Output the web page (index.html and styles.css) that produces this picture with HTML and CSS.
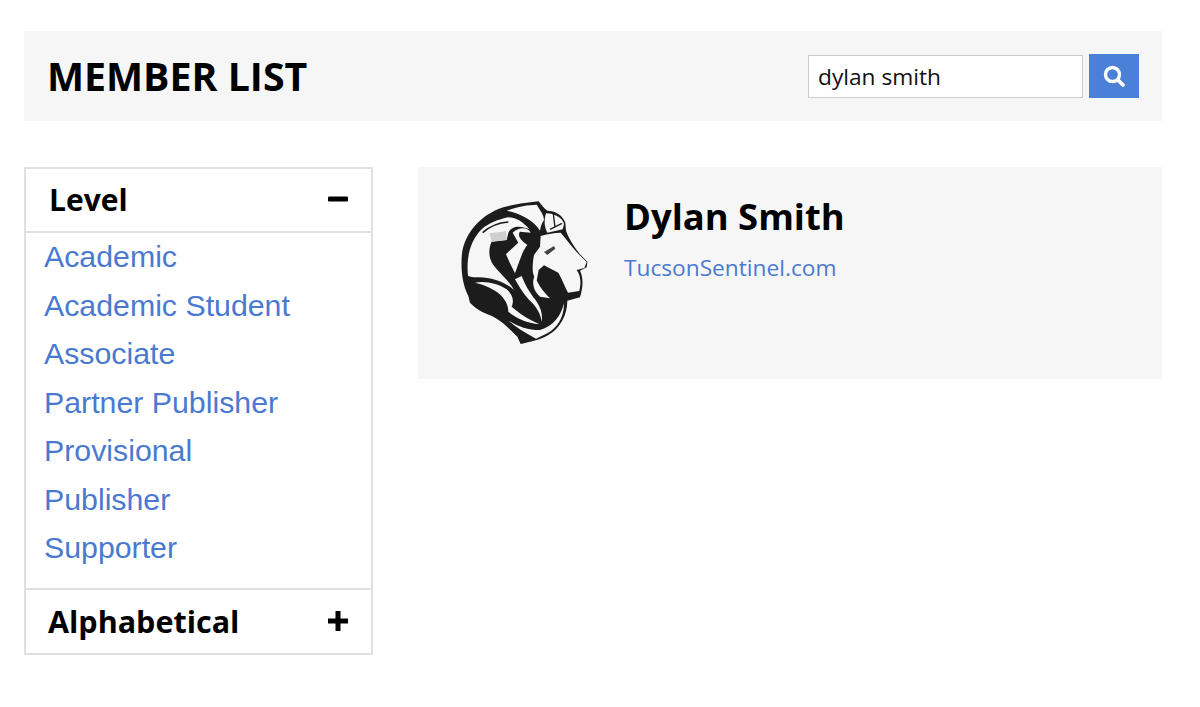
FILE: index.html
```html
<!DOCTYPE html>
<html lang="en">
<head>
<meta charset="utf-8">
<title>Member List</title>
<link rel="stylesheet" href="styles.css">
</head>
<body>
<header class="topbar">
  <h1 class="title">MEMBER LIST</h1>
  <form class="search">
    <input class="search-input" type="text" value="dylan smith">
    <button class="search-btn" type="button" aria-label="Search">
      <svg width="24" height="24" viewBox="0 0 24 24"><circle cx="10.5" cy="10.5" r="7" fill="none" stroke="#fff" stroke-width="3.4"/><path d="M15.8 15.8L21 21" stroke="#fff" stroke-width="3.8" stroke-linecap="round"/></svg>
    </button>
  </form>
</header>
<main class="layout">
  <aside class="filters">
    <div class="filter-head"><span>Level</span><svg class="sign" width="20" height="20" viewBox="0 0 20 20"><rect x="0" y="7.5" width="20" height="5" rx="1.2" fill="#000"/></svg></div>
    <ul class="filter-list">
      <li><a href="#">Academic</a></li>
      <li><a href="#">Academic Student</a></li>
      <li><a href="#">Associate</a></li>
      <li><a href="#">Partner Publisher</a></li>
      <li><a href="#">Provisional</a></li>
      <li><a href="#">Publisher</a></li>
      <li><a href="#">Supporter</a></li>
    </ul>
    <div class="filter-head filter-head-alpha"><span>Alphabetical</span><svg class="sign" width="20" height="20" viewBox="0 0 20 20"><path d="M0 7.5h7.5V0h5v7.5H20v5h-7.5V20h-5v-7.5H0z" fill="#000"/></svg></div>
  </aside>
  <section class="result">
    <svg class="lion" width="170" height="165" viewBox="0 0 510 495">
      <path fill="#1c1c1c" d="M296 34C305 45 312 55 322 62C345 62 368 75 376 98L378 122C392 160 420 195 442 215L440 232L420 242C430 262 430 290 420 322L382 332C382 375 360 415 325 435C300 450 270 455 242 462L232 440C210 420 190 395 160 380C140 370 115 365 90 338L85 318C65 280 62 230 66 190C75 130 120 75 190 52C225 42 260 38 296 34Z"/>
      <path fill="#f6f6f6" d="M84 258C78 200 92 150 125 118C145 100 175 88 205 82C225 82 250 95 268 118C240 105 215 108 205 128L200 150L155 155C145 175 145 205 160 225C175 245 205 270 222 300C195 275 150 262 118 262C105 262 95 262 84 258Z"/>
      <path fill="none" stroke="#1c1c1c" stroke-width="5" d="M128 128C150 108 175 98 205 96"/>
      <path fill="#cfcfcf" d="M148 130L198 124L200 150L155 155Z"/>
      <path fill="#f6f6f6" d="M200 62C235 48 265 45 290 44C300 60 312 75 312 90C305 100 302 110 300 122C285 95 245 70 200 62Z"/>
      <path fill="#f6f6f6" d="M318 70C345 70 368 85 372 102L368 118L322 128C312 110 312 90 318 70Z"/>
      <path fill="none" stroke="#1c1c1c" stroke-width="4" d="M340 72L345 112M330 118L366 100"/>
      <path fill="#f6f6f6" d="M198 192L235 158L218 128C235 110 265 110 272 128L240 125C232 135 240 150 262 165C248 180 240 210 225 250C215 230 205 210 198 192Z"/>
      <path fill="#f6f6f6" d="M302 138C320 132 345 128 362 128C372 140 382 152 392 165C408 185 425 202 440 216L433 234L410 240C425 260 422 285 418 303L384 308C375 290 365 265 355 248L312 226L296 240L290 272C282 262 278 250 278 238C278 220 280 205 282 195L300 170Z"/>
      <path fill="#444" d="M312 186L342 168L346 176L322 195Z"/>
      <path fill="#f6f6f6" d="M285 255C290 280 310 305 330 325L300 320C278 300 275 275 285 255Z"/>
      <path fill="#f6f6f6" d="M105 278C140 272 175 282 200 298C220 315 222 335 215 350C235 368 265 388 298 402C262 400 230 385 205 365C205 340 190 318 165 302C145 290 125 282 105 278Z"/>
      <path fill="#f6f6f6" d="M225 268C240 295 255 318 270 332C290 350 302 372 305 395C310 365 295 340 280 322C268 305 255 285 245 258Z"/>
      <path fill="#f6f6f6" d="M206 392C235 410 265 420 300 420C340 408 362 380 372 340C372 385 350 415 322 430L288 446C255 428 228 412 206 392Z"/>
    </svg>
    <div class="member">
      <h2 class="member-name">Dylan Smith</h2>
      <a class="member-link" href="#">TucsonSentinel.com</a>
    </div>
  </section>
</main>
</body>
</html>
```

FILE: styles.css
```css
* { box-sizing: border-box; }
html, body { margin: 0; padding: 0; background: #fff; }
body { padding: 31px 38px 0 24px; font-family: "Open Sans", "Noto Sans", sans-serif; color: #000; }
.topbar { height: 90px; background: #f6f6f6; display: flex; align-items: center; justify-content: space-between; padding: 0 23px; }
.title { margin: 2px 0 0; font-size: 39.3px; line-height: 1; font-weight: 700; }
.search { display: flex; align-items: center; gap: 6px; margin: 0; }
.search-input { width: 275px; height: 43px; border: 1px solid #ccc; background: #fff; padding: 0 9px; font: 400 22.7px "Open Sans", sans-serif; color: #111; outline: none; }
.search-btn { width: 50px; height: 44px; border: 0; padding: 0; background: #4a80d8; display: flex; align-items: center; justify-content: center; }
.layout { display: flex; gap: 45px; align-items: flex-start; margin-top: 46px; }
.filters { width: 349px; height: 488px; border: 2px solid #e0e0e0; display: flex; flex-direction: column; }
.filter-head { height: 64px; flex: none; display: flex; align-items: center; justify-content: space-between; padding: 0 23px 2px 23px; font-size: 30px; font-weight: 700; border-bottom: 2px solid #e0e0e0; }
.filter-head-alpha { border-bottom: 0; border-top: 2px solid #e0e0e0; height: 67px; padding: 0 23px 3px 22px; font-size: 30.5px; }
.sign { flex: none; }
.filter-list { list-style: none; margin: 0; padding: 0 0 15px 18px; flex: 1; font-family: "Liberation Sans", Arial, sans-serif; font-size: 30.3px; line-height: 48.5px; }
.filter-list a { color: #4a7ad0; text-decoration: none; }
.result { flex: 1; height: 212px; background: #f6f6f6; padding: 23px 0 0 22px; display: flex; align-items: flex-start; }
.lion { flex: none; filter: blur(0.4px); }
.member { margin-left: 14px; }
.member-name { margin: 1px 0 0; font-size: 36.4px; line-height: 50px; font-weight: 700; }
.member-link { display: block; margin-top: 11px; font-size: 22.7px; line-height: 32px; color: #4a7ad0; text-decoration: none; }
```
